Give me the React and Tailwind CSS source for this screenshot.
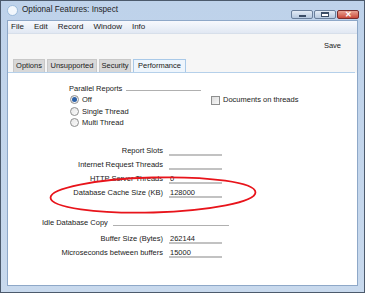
import React from 'react'

const menus = ['File', 'Edit', 'Record', 'Window', 'Info']
const tabs = [
  { name: 'Options', w: 'w-[32px]' },
  { name: 'Unsupported', w: 'w-[50px]' },
  { name: 'Security', w: 'w-[32px]' },
  { name: 'Performance', w: 'w-[53px]', active: true },
]

function Radio({ checked, label }) {
  return (
    <div className="flex h-[11.5px] items-center pl-[1px]">
      <span className="flex h-[9px] w-[9px] items-center justify-center rounded-full border border-[#8e8f8f] bg-gradient-to-br from-[#e6e6e6] to-[#fbfbfb]">
        {checked && <span className="h-[5px] w-[5px] rounded-full bg-[#2c61a8]" />}
      </span>
      <span className="ml-[3px]">{label}</span>
    </div>
  )
}

function Field({ label, value }) {
  return (
    <div className="flex h-[14px] items-center">
      <div className="w-[155px] text-right">{label}</div>
      <div className="ml-[6px] h-[10px] w-[53px] border-b-2 border-[#c2c2c2] pl-[1px] leading-[9px]">{value}</div>
    </div>
  )
}

function CaptionButton({ children, close }) {
  return (
    <div
      className={
        'flex h-[9px] w-[22px] items-center justify-center rounded-[2px] border ' +
        (close
          ? 'border-[#7a2c2c] bg-gradient-to-b from-[#e8a293] to-[#c9473a]'
          : 'border-[#6a7f9b] bg-gradient-to-b from-[#e4ecf6] to-[#b6c8de]')
      }
    >
      {children}
    </div>
  )
}

export default function App() {
  return (
    <div className="flex h-[293px] w-[365px] flex-col border border-[#4c5a6c] bg-gradient-to-b from-[#bed2ea] to-[#c8d9ed] font-['Liberation_Sans',Arial,sans-serif] text-[7.5px] text-[#1a1a1a]">
      {/* title bar */}
      <div className="flex h-[19px] items-center pl-[6px] pr-[5px]">
        <svg width="11" height="11" viewBox="0 0 11 11">
          <circle cx="5.5" cy="5.5" r="5" fill="#f2f7fc" stroke="#8fb2d6" strokeWidth="0.8" />
          <path d="M3.2 1.8 A4 4 0 0 0 9.4 8.2 A3.2 3.2 0 0 1 3.2 1.8 Z" fill="#2f78c4" />
        </svg>
        <span className="ml-[4px] text-[8.2px] text-[#1e1e1e]">Optional Features: Inspect</span>
        <div className="ml-auto mt-[8px] flex gap-[1px]">
          <CaptionButton>
            <span className="mt-[2px] h-[2px] w-[7px] border border-[#3b4d66] bg-white" />
          </CaptionButton>
          <CaptionButton>
            <span className="h-[5px] w-[8px] border border-[#3b4d66] border-t-2 bg-white" />
          </CaptionButton>
          <CaptionButton close>
            <span className="text-[8px] font-bold leading-none text-white">✕</span>
          </CaptionButton>
        </div>
      </div>

      {/* client */}
      <div className="mx-[6px] mb-[6px] flex flex-1 flex-col border border-[#8ea8c8] bg-[#f6f6f6]">
        <div className="flex h-[13px] items-center gap-[10px] border-b border-[#d7dfea] bg-gradient-to-b from-[#f7f9fd] to-[#e1e8f3] pl-[3px] text-[8px]">
          {menus.map((m) => (
            <span key={m}>{m}</span>
          ))}
        </div>
        <div className="flex h-[24px] items-center justify-end pr-[16px] text-[7.5px]">Save</div>
        <div className="mr-[2px] flex h-[15px] items-end gap-[2px] border-b border-[#b5d0ea] pl-[5px]">
          {tabs.map((t) => (
            <div
              key={t.name}
              className={
                'flex h-[13px] items-center justify-center border ' +
                t.w +
                (t.active ? ' border-[#a9c9e8] border-b-0 bg-[#eef5fc]' : ' border-[#c8c8c8] border-b-0 bg-[#d8d8d8]')
              }
            >
              {t.name}
            </div>
          ))}
        </div>

        <div className="relative flex-1 bg-white">
          {/* parallel reports */}
          <div className="flex pl-[61px] pt-[10px]">
            <div className="w-[142px]">
              <div className="flex h-[11px] items-center">
                <span>Parallel Reports</span>
                <div className="ml-[4px] mt-[4px] h-px w-[75px] bg-[#b0b0b0]" />
              </div>
              <Radio checked label="Off" />
              <Radio label="Single Thread" />
              <Radio label="Multi Thread" />
            </div>
            <div className="pt-[11.5px]">
              <div className="flex h-[11px] items-center">
                <span className="h-[9px] w-[9px] border border-[#8e8f8f] bg-gradient-to-br from-[#dcdcdc] to-[#f8f8f8]" />
                <span className="ml-[3px]">Documents on threads</span>
              </div>
            </div>
          </div>

          <div className="mt-[15.5px]">
            <Field label="Report Slots" value="" />
            <Field label="Internet Request Threads" value="" />
            <Field label="HTTP Server Threads" value="0" />
            <Field label="Database Cache Size (KB)" value="128000" />
          </div>

          <div className="mt-[17.5px] flex h-[11px] items-center pl-[34px]">
            <span>Idle Database Copy</span>
            <div className="ml-[5px] mt-[4px] h-px w-[116px] bg-[#b0b0b0]" />
          </div>
          <div className="mt-[3.5px]">
            <Field label="Buffer Size (Bytes)" value="262144" />
            <Field label="Microseconds between buffers" value="15000" />
          </div>

          <svg className="absolute left-[40px] top-[102px]" width="220" height="42" viewBox="0 0 220 42">
            <ellipse cx="105" cy="20" rx="102.5" ry="17.5" fill="none" stroke="#e8141b" strokeWidth="1.8" transform="rotate(-1.5 105 20)" />
          </svg>
        </div>
      </div>
    </div>
  )
}
